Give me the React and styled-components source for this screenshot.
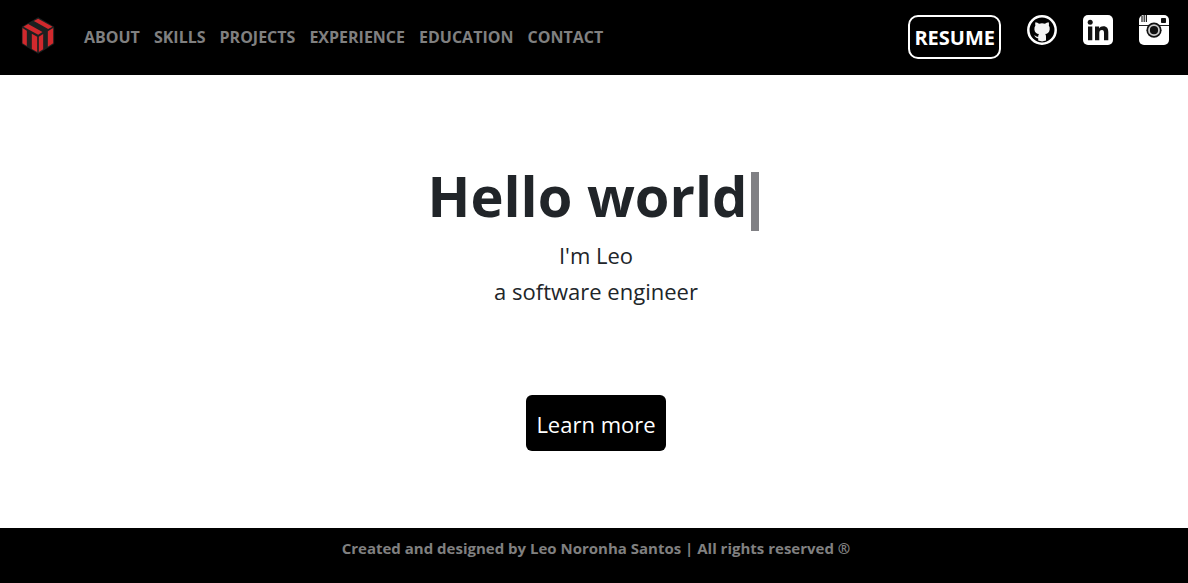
import React from 'react';
import styled, { createGlobalStyle } from 'styled-components';

const GlobalStyle = createGlobalStyle`
  *, *::before, *::after { box-sizing: border-box; }
  body {
    margin: 0;
    background: #fff;
    color: #212529;
    font-family: 'Segoe UI', 'Open Sans', 'Noto Sans', sans-serif;
    font-size: 16px;
    line-height: 24px;
  }
`;

const Page = styled.div`
  display: flex;
  flex-direction: column;
  min-height: 100vh;
`;

const Header = styled.header`
  display: flex;
  align-items: flex-start;
  justify-content: space-between;
  gap: 24px;
  min-height: 75px;
  padding: 15px 19px;
  background: #000;
`;

const Nav = styled.nav`
  display: flex;
  align-items: center;
  gap: 29px;
`;

const LogoLink = styled.a`
  display: block;
  height: 44px;
  padding: 2px 0 0 2px;
  svg { display: block; }
`;

const NavList = styled.ul`
  display: flex;
  flex-wrap: wrap;
  gap: 14px;
  margin: 0;
  padding: 0;
  list-style: none;
`;

const NavLink = styled.a`
  display: block;
  color: #808080;
  font-size: 16px;
  font-weight: 700;
  text-decoration: none;
`;

const Actions = styled.div`
  display: flex;
  align-items: flex-start;
  gap: 26px;
`;

const ResumeButton = styled.button`
  height: 44px;
  padding: 2px 4px 0;
  border: 2px solid #fff;
  border-radius: 10px;
  background: #000;
  color: #fff;
  font: inherit;
  font-size: 20px;
  font-weight: 700;
  cursor: pointer;
`;

const SocialLink = styled.a`
  display: block;
  svg { display: block; }
`;

const Hero = styled.main`
  flex: 1;
  display: flex;
  flex-direction: column;
  align-items: center;
  padding: 84px 0 77px 4px;
  text-align: center;
`;

const Title = styled.h1`
  margin: 0;
  font-size: 56px;
  font-weight: 700;
  line-height: 72px;
`;

const Cursor = styled.span`
  display: inline-block;
  width: 8px;
  height: 59px;
  margin: 0 5px 0 4px;
  background: #808084;
  vertical-align: -14px;
`;

const Intro = styled.p`
  margin: 6px 0 0;
  font-size: 22px;
  font-weight: 400;
  line-height: 36px;
`;

const LearnButton = styled.button`
  height: 56px;
  margin-top: auto;
  padding: 2px 10px 0;
  border: 0;
  border-radius: 6px;
  background: #000;
  color: #fff;
  font: inherit;
  font-size: 22px;
  cursor: pointer;
`;

const Footer = styled.footer`
  min-height: 55px;
  padding: 8px 0 8px 4px;
  background: #000;
  color: #808080;
  font-size: 15px;
  font-weight: 700;
  text-align: center;
`;

const links = ['About', 'Skills', 'Projects', 'Experience', 'Education', 'Contact'];

const Logo = () => (
  <svg width="34" height="37" viewBox="33 27 101 111" aria-hidden="true">
    <path d="M84 28 132 56V108L84 137 35 108V56Z" fill="#1c2020" />
    <g fill="#d0292d">
      <path d="M84 32 127 56 114 63 71 39Z" />
      <path d="M54 48 97 72 84 80 40 56Z" />
      <path d="M37 60 50 68V114L37 106Z" />
      <path d="M65 77 81 86V132L65 123Z" />
      <path d="M86 86 99 78V124L86 132Z" />
      <path d="M113 70 129 60V106L113 116Z" />
    </g>
  </svg>
);

const GithubIcon = () => (
  <svg width="30" height="30" viewBox="0 0 30 30" aria-hidden="true">
    <circle cx="15" cy="15" r="13.7" fill="#000" stroke="#fff" strokeWidth="2.5" />
    <path
      fill="#f4f4f4"
      d="M8.4 7.2C9.8 7.2 11.2 8 12 8.7Q15 8 18 8.7C19 8 20.4 7.2 21.7 7.2Q22.3 9 21.8 10.4Q23 12 22.7 14.5C22.3 17.6 20.5 18.7 18.2 19.1Q19 20 19 21.5V25.6Q15 27.2 11.2 25.6V23.2C8.4 23.7 8.6 21.3 7 20.6C9 20.3 9 22.3 11.2 21.7Q11.2 19.8 12 19.1C9.5 18.7 7.7 17.6 7.4 14.5Q7.2 12 8.4 10.4Q7.9 9 8.4 7.2Z"
    />
  </svg>
);

const LinkedinIcon = () => (
  <svg width="30" height="30" viewBox="0 0 30 30" aria-hidden="true">
    <rect width="30" height="30" rx="5" fill="#fff" />
    <g fill="#111">
      <circle cx="7.2" cy="7.3" r="2.5" />
      <path d="M5 11.6H9.3V25.2H5ZM12 11.6H16.1V13.5C17 12.1 18.4 11.2 20.3 11.2C24 11.2 25.3 13.5 25.3 17.2V25.2H21V18C21 16 20.5 14.9 19 14.9C17.2 14.9 16.3 16.1 16.3 18V25.2H12Z" />
    </g>
  </svg>
);

const InstagramIcon = () => (
  <svg width="30" height="30" viewBox="0 0 30 30" aria-hidden="true">
    <rect width="30" height="30" rx="5" fill="#fff" />
    <path d="M3 1V7M5.2 0V7M7.4 0V7" stroke="#222" strokeWidth="1.2" />
    <rect x="22" y="3" width="5" height="5" rx="0.8" fill="#111" />
    <path d="M0 10.5H30" stroke="#222" strokeWidth="1" />
    <circle cx="15" cy="15.2" r="7.6" fill="#111" />
    <circle cx="15" cy="15.2" r="5" fill="#111" stroke="#ccc" strokeWidth="1.8" />
  </svg>
);

export default function App() {
  return (
    <>
      <GlobalStyle />
      <Page>
        <Header>
          <Nav aria-label="Main">
            <LogoLink href="#home" aria-label="Home"><Logo /></LogoLink>
            <NavList>
              {links.map((label) => (
                <li key={label}>
                  <NavLink href={`#${label.toLowerCase()}`}>{label.toUpperCase()}</NavLink>
                </li>
              ))}
            </NavList>
          </Nav>
          <Actions>
            <ResumeButton type="button">RESUME</ResumeButton>
            <SocialLink href="#github" aria-label="GitHub"><GithubIcon /></SocialLink>
            <SocialLink href="#linkedin" aria-label="LinkedIn"><LinkedinIcon /></SocialLink>
            <SocialLink href="#instagram" aria-label="Instagram"><InstagramIcon /></SocialLink>
          </Actions>
        </Header>
        <Hero>
          <Title>Hello world<Cursor aria-hidden="true" /></Title>
          <Intro>I'm Leo<br />a software engineer</Intro>
          <LearnButton type="button">Learn more</LearnButton>
        </Hero>
        <Footer>Created and designed by Leo Noronha Santos | All rights reserved ®</Footer>
      </Page>
    </>
  );
}
